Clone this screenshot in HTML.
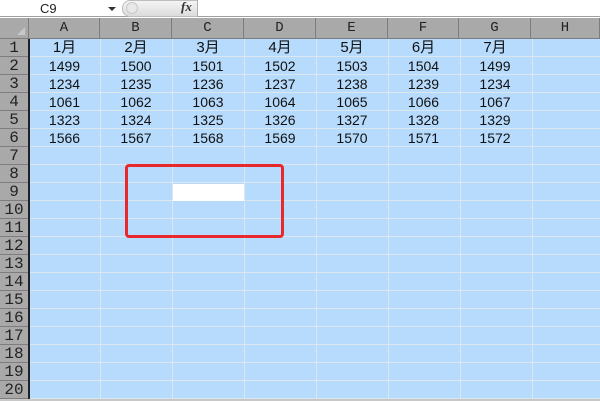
<!DOCTYPE html>
<html><head><meta charset="utf-8"><style>
*{margin:0;padding:0;box-sizing:border-box}
body{width:600px;height:401px;overflow:hidden;background:#fff;position:relative;font-family:"Liberation Sans","Noto Sans CJK SC",sans-serif}
.abs{position:absolute}
.hdr{background:#a9a9a9;color:#222;font-family:"Liberation Mono","Noto Sans CJK SC",monospace;font-size:14px;text-align:center;border-right:1px solid #7d7d7d;border-bottom:1px solid #7d7d7d}
.cell{font-size:14px;color:#111;text-align:center;line-height:18px}
</style></head><body>
<div class="abs" style="left:0;top:0;width:600px;height:17px;background:#fff;border-bottom:1px solid #a0a0a0"></div>
<div class="abs" style="left:40px;top:1px;font-size:13px;color:#222">C9</div>
<div class="abs" style="left:108px;top:7px;width:0;height:0;border-left:4px solid transparent;border-right:4px solid transparent;border-top:4px solid #333"></div>
<div class="abs" style="left:122px;top:0;width:76px;height:17px;background:linear-gradient(#f4f4f4,#dcdcdc);border:1px solid #bdbdbd;border-radius:8px 0 0 8px"></div>
<div class="abs" style="left:126px;top:2px;width:12px;height:12px;border-radius:50%;background:#e8e8e8;border:1px solid #c8c8c8"></div>
<div class="abs" style="left:181px;top:-1px;font-family:'Liberation Serif',serif;font-style:italic;font-weight:bold;font-size:13px;color:#333">fx</div>
<div class="abs" style="left:197px;top:0;width:1px;height:17px;background:#b0b0b0"></div>
<div class="abs" style="left:29px;top:39px;width:571px;height:360px;background-color:#b7dbfd;
background-image:linear-gradient(to right,#dbe6ee 1px,transparent 1px),linear-gradient(to bottom,#dbe6ee 1px,transparent 1px);
background-size:72px 18px,72px 18px;background-position:71px 17px,0 17px"></div>
<div class="abs" style="left:0;top:399px;width:600px;height:2px;background:#c8c8c8"></div>
<div class="abs hdr" style="left:0;top:18px;width:29px;height:21px"></div>
<div class="abs" style="left:17px;top:27px;width:0;height:0;border-left:8px solid transparent;border-bottom:8px solid #c8c8c8"></div>
<div id="cols"></div>
<div id="rows"></div>
<div class="abs" style="left:28px;top:39px;width:2px;height:360px;background:#222"></div>
<div class="abs" style="left:173px;top:184px;width:71px;height:17px;background:#fff"></div>
<div class="abs" style="left:125px;top:164px;width:159px;height:74px;border:3px solid #e8282a;border-radius:4px"></div>
<div id="data"></div>
<script>
var L=[29,100,172,244,316,388,459,531,600],n="ABCDEFGH",h="";
for(var i=0;i<8;i++)h+='<div class="abs hdr" style="left:'+L[i]+'px;top:18px;width:'+(L[i+1]-L[i])+'px;height:21px;line-height:20px">'+n[i]+'</div>';
document.getElementById('cols').innerHTML=h;h="";
for(var r=0;r<20;r++)h+='<div class="abs hdr" style="left:0;top:'+(39+r*18)+'px;width:29px;height:18px;line-height:18px;font-size:16px">'+(r+1)+'</div>';
document.getElementById('rows').innerHTML=h;h="";
var d=[["1月","2月","3月","4月","5月","6月","7月"],[1499,1500,1501,1502,1503,1504,1499],[1234,1235,1236,1237,1238,1239,1234],[1061,1062,1063,1064,1065,1066,1067],[1323,1324,1325,1326,1327,1328,1329],[1566,1567,1568,1569,1570,1571,1572]];
for(var r=0;r<6;r++)for(var c=0;c<7;c++)h+='<div class="abs cell" style="left:'+L[c]+'px;top:'+(39+r*18)+'px;width:'+(L[c+1]-L[c])+'px;'+(r==0?'font-size:15px;':'')+'">'+d[r][c]+'</div>';
document.getElementById('data').innerHTML=h;
</script>
</body></html>
